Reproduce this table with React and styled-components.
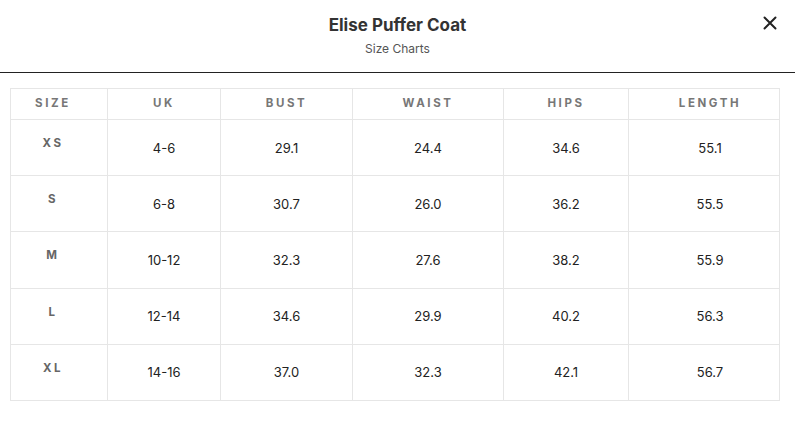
import React from "react";
import styled, { createGlobalStyle } from "styled-components";

const GlobalStyle = createGlobalStyle`
  html, body {
    margin: 0;
    padding: 0;
    background: #ffffff;
    font-family: Inter, "Open Sans", sans-serif;
    color: #222;
  }
`;

const rows = [
  ["XS", "4-6", "29.1", "24.4", "34.6", "55.1"],
  ["S", "6-8", "30.7", "26.0", "36.2", "55.5"],
  ["M", "10-12", "32.3", "27.6", "38.2", "55.9"],
  ["L", "12-14", "34.6", "29.9", "40.2", "56.3"],
  ["XL", "14-16", "37.0", "32.3", "42.1", "56.7"],
];

const heads = ["Size", "UK", "Bust", "Waist", "Hips", "Length"];
const widths = [97, 113, 132, 151, 125, 151];

const Modal = styled.div`
  width: 795px;
  height: 431px;
  background: #fff;
`;

const Header = styled.header`
  position: relative;
  height: 73px;
  border-bottom: 1px solid #222;
  display: flex;
  flex-direction: column;
  align-items: center;
  padding-top: 14px;
  box-sizing: border-box;
`;

const Title = styled.h2`
  margin: 0;
  font-size: 17px;
  font-weight: 700;
  color: #333;
  line-height: 22px;
`;

const Subtitle = styled.p`
  margin: 5px 0 0;
  font-size: 12px;
  color: #555;
  line-height: 16px;
`;

const Close = styled.button`
  position: absolute;
  top: 15px;
  right: 17px;
  width: 16px;
  height: 16px;
  padding: 0;
  border: 0;
  background: none;
  cursor: pointer;
`;

const Body = styled.div`
  padding: 15px 16px 0 10px;
`;

const Table = styled.table`
  border-collapse: collapse;
  table-layout: fixed;
  width: 769px;
`;

const Row = styled.tr`
  height: ${(p) => (p.$head ? "31px" : "56.2px")};
`;

const HeadCell = styled.th`
  border: 1px solid #e6e6e6;
  font-size: 11.5px;
  font-weight: 700;
  letter-spacing: 2.6px;
  text-transform: uppercase;
  color: #777;
  text-align: center;
  vertical-align: middle;
  padding: 0 0 3px;
  padding-right: ${(p) => (p.$first ? "12px" : "0")};
  padding-left: ${(p) => (p.$last ? "12px" : "0")};
`;

const Cell = styled.td`
  border: 1px solid #e6e6e6;
  font-size: ${(p) => (p.$first ? "11.5px" : "13px")};
  font-weight: ${(p) => (p.$first ? 700 : 400)};
  letter-spacing: ${(p) => (p.$first ? "2.6px" : "0")};
  color: ${(p) => (p.$first ? "#666" : "#222")};
  text-align: center;
  vertical-align: middle;
  padding: 0;
  padding-right: ${(p) => (p.$first ? "12px" : "0")};
  padding-left: ${(p) => (p.$last ? "12px" : "0")};
  padding-bottom: ${(p) => (p.$first ? "9px" : "0")};
`;

export default function App() {
  return (
    <>
      <GlobalStyle />
      <Modal>
        <Header>
          <Title>Elise Puffer Coat</Title>
          <Subtitle>Size Charts</Subtitle>
          <Close aria-label="Close">
            <svg width="16" height="16" viewBox="0 0 16 16">
              <path d="M2.5 2.5 L13.5 13.5 M13.5 2.5 L2.5 13.5" stroke="#222" strokeWidth="2" strokeLinecap="round" />
            </svg>
          </Close>
        </Header>
        <Body>
          <Table>
            <colgroup>
              {widths.map((w, i) => (
                <col key={i} style={{ width: w }} />
              ))}
            </colgroup>
            <thead>
              <Row $head>
                {heads.map((h, i) => (
                  <HeadCell key={h} $first={i === 0} $last={i === heads.length - 1}>
                    {h}
                  </HeadCell>
                ))}
              </Row>
            </thead>
            <tbody>
              {rows.map((r) => (
                <Row key={r[0]}>
                  {r.map((v, i) => (
                    <Cell key={i} $first={i === 0} $last={i === r.length - 1}>
                      {v}
                    </Cell>
                  ))}
                </Row>
              ))}
            </tbody>
          </Table>
        </Body>
      </Modal>
    </>
  );
}
